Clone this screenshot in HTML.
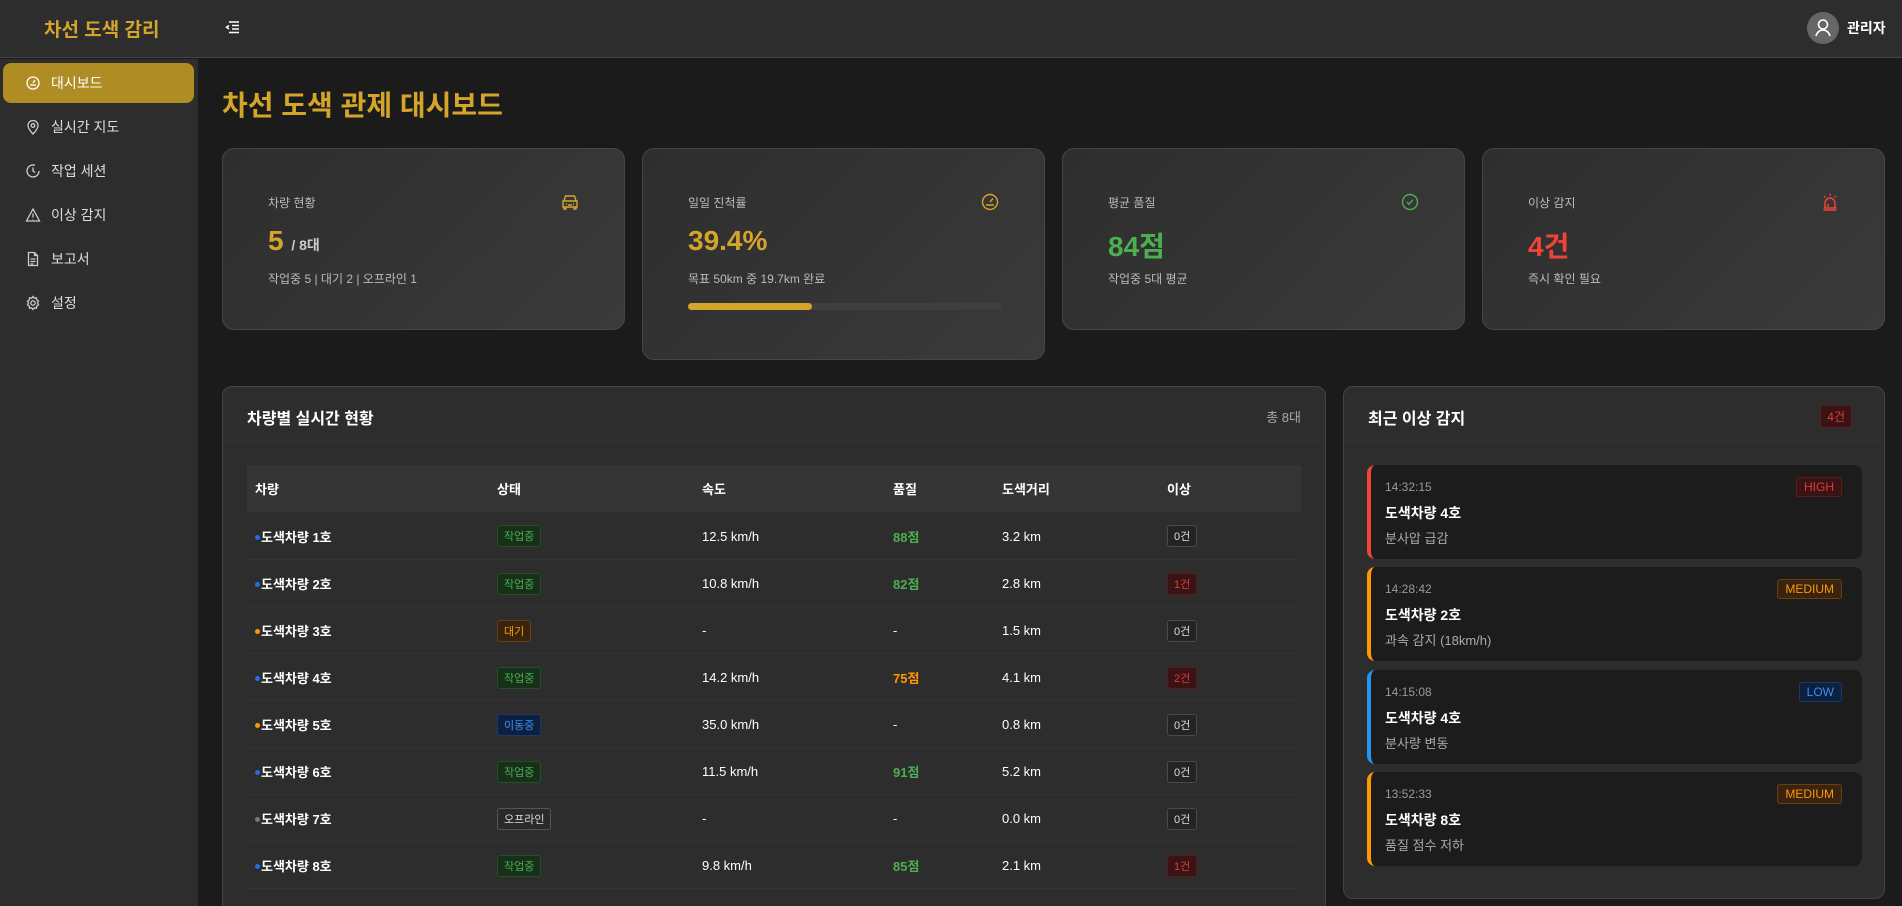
<!DOCTYPE html>
<html><head><meta charset="utf-8"><style>
*{box-sizing:border-box;margin:0;padding:0}
html{width:1902px;height:906px;overflow:hidden}
body{width:1902px;height:906px;overflow:hidden;background:#1b1b1b;font-family:"Liberation Sans","Noto Sans CJK KR",sans-serif;color:#fff;position:relative}
.hdr{position:absolute;left:0;top:0;width:1902px;height:58px;background:#2d2d2d;border-bottom:1px solid #444}
.logo{position:absolute;left:44px;top:15px;font-size:19px;font-weight:bold;color:#d4a52a}
.side{position:absolute;left:0;top:59px;width:198px;height:847px;background:#2d2d2d}
.nav{position:absolute;left:3px;width:191px;height:40px;border-radius:8px;display:flex;align-items:center;padding-left:22px;font-size:14px;color:#ddd;gap:10px}
.nav.act{background:#b08d24;color:#fff}
.nav svg{width:16px;height:16px}
h1{position:absolute;left:222px;top:84px;font-size:28px;color:#d4a52a;font-weight:bold}
.card{position:absolute;top:148px;height:182px;width:403px;border-radius:12px;border:1px solid #464646;background:linear-gradient(135deg,#2e2e2e,#3a3a3a)}
.card .lb{position:absolute;left:45px;top:45px;font-size:12px;color:#bbb}
.card .ic{position:absolute;right:44px;top:43px;width:20px;height:20px}
.card .v{position:absolute;left:45px;top:76px;font-size:28px;font-weight:bold}
.card .s{position:absolute;left:45px;top:121px;font-size:12px;color:#bbb}
.panel{position:absolute;top:386px;border-radius:10px;border:1px solid #444;background:#2d2d2d}
.ph{height:55px;border-bottom:1px solid #353535;position:relative}
.ph .t{position:absolute;left:24px;top:18px;font-size:16px;font-weight:bold}
table{position:absolute;left:24px;top:78px;width:1054px;border-collapse:collapse;font-size:13px}
th{height:47px;background:#353535;text-align:left;font-weight:bold;padding-left:8px;font-size:13px}
td{height:47px;border-bottom:1px solid #333;padding-left:8px;padding-top:2px}
td.n{font-weight:bold}
.dot{display:inline-block;width:5px;height:5px;border-radius:50%;margin-right:1px;vertical-align:middle;position:relative;top:-1px}
.b{display:inline-block;font-size:11px;padding:2px 6px;border-radius:3px;border:1px solid}
.g{background:#16301a;border-color:#274d27;color:#4caf50}
.o{background:#3a2410;border-color:#6a3e14;color:#ff9800}
.bl{background:#0e2040;border-color:#1b3a6a;color:#3f8ef0}
.gr{background:#2a2a2a;border-color:#555;color:#ddd}
.z{background:#242424;border-color:#4a4a4a;color:#ddd}
.r{background:#3a1414;border-color:#5c1c1c;color:#e53935}
.al{position:absolute;left:23px;width:495px;height:94px;background:#1c1c1c;border-radius:8px;border-left:4px solid}
.al .tm{position:absolute;left:14px;top:15px;font-size:12px;color:#999}
.al .nm{position:absolute;left:14px;top:38px;font-size:14px;font-weight:bold}
.al .ds{position:absolute;left:14px;top:63px;font-size:13px;color:#aaa}
.al .b{position:absolute;right:20px;top:12px;font-size:12px;padding:2px 7px}
</style></head><body>
<div class="hdr">
<div class="logo">차선 도색 감리</div>
<svg style="position:absolute;left:224px;top:19px" width="16" height="16" viewBox="0 0 16 16" fill="none" stroke="#fff" stroke-width="1.5"><path d="M5 3h10M8 6.5h7M8 10h7M5 13.5h10M5 6.5L2.5 8.2 5 10"/></svg>
<div style="position:absolute;left:1807px;top:12px;width:32px;height:32px;border-radius:50%;background:#666"><svg width="32" height="32" viewBox="0 0 32 32" fill="none" stroke="#fff" stroke-width="1.6"><circle cx="16" cy="12.5" r="4.5"/><path d="M9 24c1-4 4-6 7-6s6 2 7 6"/></svg></div>
<div style="position:absolute;left:1847px;top:18px;font-size:14px;font-weight:bold">관리자</div>
</div>
<div class="side">
<div class="nav act" style="top:4px"><svg viewBox="0 0 16 16" fill="none" stroke="#fff" stroke-width="1.3"><circle cx="8" cy="8" r="6"/><path d="M8 8l2-3M5 10h6"/></svg>대시보드</div>
<div class="nav" style="top:48px"><svg viewBox="0 0 16 16" fill="none" stroke="#ccc" stroke-width="1.3"><path d="M8 15s5-5 5-8.5A5 5 0 0 0 3 6.5C3 10 8 15 8 15z"/><circle cx="8" cy="6.5" r="1.8"/></svg>실시간 지도</div>
<div class="nav" style="top:92px"><svg viewBox="0 0 16 16" fill="none" stroke="#ccc" stroke-width="1.3"><path d="M14 8A6 6 0 1 1 10 2.3M8 4.5V8l2 1.5"/></svg>작업 세션</div>
<div class="nav" style="top:136px"><svg viewBox="0 0 16 16" fill="none" stroke="#ccc" stroke-width="1.3"><path d="M8 2L1.5 14h13zM8 6.5v4M8 12v.5"/></svg>이상 감지</div>
<div class="nav" style="top:180px"><svg viewBox="0 0 16 16" fill="none" stroke="#ccc" stroke-width="1.3"><path d="M3.5 1.5h6l3 3v10h-9zM9.5 1.5v3h3M5.5 8h5M5.5 10.5h5M5.5 13h3"/></svg>보고서</div>
<div class="nav" style="top:224px"><svg viewBox="0 0 16 16" fill="none" stroke="#ccc" stroke-width="1.3"><circle cx="8" cy="8" r="2.2"/><path d="M8 1.5l1.3 1.7 2.1-.4.4 2.1 1.7 1.3-1 1.8 1 1.8-1.7 1.3-.4 2.1-2.1-.4L8 14.5l-1.3-1.7-2.1.4-.4-2.1L2.5 9.8l1-1.8-1-1.8 1.7-1.3.4-2.1 2.1.4z"/></svg>설정</div>
</div>
<h1>차선 도색 관제 대시보드</h1>

<div class="card" style="left:222px"><div class="lb">차량 현황</div>
<svg class="ic" viewBox="0 0 20 20" fill="none" stroke="#d4a52a" stroke-width="1.4"><path d="M4 9l1.5-5h9L16 9M3 9h14v6H3zM4 15v2h2v-2M14 15v2h2v-2M6 12h1M13 12h1M8 13h4"/></svg>
<div class="v" style="color:#d4a52a">5 <span style="font-size:14px;color:#ccc">/ 8대</span></div><div class="s">작업중 5 | 대기 2 | 오프라인 1</div></div>
<div class="card" style="left:642px;height:212px"><div class="lb">일일 진척률</div>
<svg class="ic" viewBox="0 0 20 20" fill="none" stroke="#d4a52a" stroke-width="1.4"><circle cx="10" cy="10" r="7.5"/><path d="M10 10l3-3.5M6 13h8"/></svg>
<div class="v" style="color:#d4a52a">39.4%</div><div class="s">목표 50km 중 19.7km 완료</div>
<div style="position:absolute;left:45px;top:154px;width:314px;height:7px;border-radius:4px;background:#3f3f3f"><div style="width:39.4%;height:7px;border-radius:4px;background:#d4a52a"></div></div></div>
<div class="card" style="left:1062px"><div class="lb">평균 품질</div>
<svg class="ic" viewBox="0 0 20 20" fill="none" stroke="#4caf50" stroke-width="1.4"><circle cx="10" cy="10" r="7.5"/><path d="M7 10l2 2.2 4-4.5"/></svg>
<div class="v" style="color:#4caf50">84점</div><div class="s">작업중 5대 평균</div></div>
<div class="card" style="left:1482px"><div class="lb">이상 감지</div>
<svg class="ic" viewBox="0 0 20 20" fill="none" stroke="#f44336" stroke-width="1.4"><path d="M5 16v-5a5 5 0 0 1 10 0v5M3.5 16h13M3.5 18h13M10 1.5v2M4 4l1.3 1.3M16 4l-1.3 1.3M8 15v-3"/></svg>
<div class="v" style="color:#f44336">4건</div><div class="s">즉시 확인 필요</div></div>

<div class="panel" style="left:222px;width:1104px;height:530px">
<div class="ph"><div class="t">차량별 실시간 현황</div><div style="position:absolute;right:24px;top:20px;font-size:13px;color:#aaa">총 8대</div></div>
<table>
<tr><th style="width:242px">차량</th><th style="width:205px">상태</th><th style="width:191px">속도</th><th style="width:109px">품질</th><th style="width:165px">도색거리</th><th>이상</th></tr>
<tr><td class="n"><span class="dot" style="background:#1e6fe0"></span>도색차량 1호</td><td><span class="b g">작업중</span></td><td>12.5 km/h</td><td style="color:#4caf50;font-weight:bold">88점</td><td>3.2 km</td><td><span class="b z">0건</span></td></tr>
<tr><td class="n"><span class="dot" style="background:#1e6fe0"></span>도색차량 2호</td><td><span class="b g">작업중</span></td><td>10.8 km/h</td><td style="color:#4caf50;font-weight:bold">82점</td><td>2.8 km</td><td><span class="b r">1건</span></td></tr>
<tr><td class="n"><span class="dot" style="background:#ff9800"></span>도색차량 3호</td><td><span class="b o">대기</span></td><td>-</td><td>-</td><td>1.5 km</td><td><span class="b z">0건</span></td></tr>
<tr><td class="n"><span class="dot" style="background:#1e6fe0"></span>도색차량 4호</td><td><span class="b g">작업중</span></td><td>14.2 km/h</td><td style="color:#ff9800;font-weight:bold">75점</td><td>4.1 km</td><td><span class="b r">2건</span></td></tr>
<tr><td class="n"><span class="dot" style="background:#ff9800"></span>도색차량 5호</td><td><span class="b bl">이동중</span></td><td>35.0 km/h</td><td>-</td><td>0.8 km</td><td><span class="b z">0건</span></td></tr>
<tr><td class="n"><span class="dot" style="background:#1e6fe0"></span>도색차량 6호</td><td><span class="b g">작업중</span></td><td>11.5 km/h</td><td style="color:#4caf50;font-weight:bold">91점</td><td>5.2 km</td><td><span class="b z">0건</span></td></tr>
<tr><td class="n"><span class="dot" style="background:#777"></span>도색차량 7호</td><td><span class="b gr">오프라인</span></td><td>-</td><td>-</td><td>0.0 km</td><td><span class="b z">0건</span></td></tr>
<tr><td class="n"><span class="dot" style="background:#1e6fe0"></span>도색차량 8호</td><td><span class="b g">작업중</span></td><td>9.8 km/h</td><td style="color:#4caf50;font-weight:bold">85점</td><td>2.1 km</td><td><span class="b r">1건</span></td></tr>
</table></div>

<div class="panel" style="left:1343px;width:542px;height:513px">
<div class="ph"><div class="t">최근 이상 감지</div><span class="b r" style="position:absolute;right:32px;top:18px;font-size:12px">4건</span></div>
<div class="al" style="top:78px;border-color:#f44336"><div class="tm">14:32:15</div><div class="nm">도색차량 4호</div><div class="ds">분사압 급감</div><span class="b r">HIGH</span></div>
<div class="al" style="top:180px;border-color:#ff9800"><div class="tm">14:28:42</div><div class="nm">도색차량 2호</div><div class="ds">과속 감지 (18km/h)</div><span class="b o">MEDIUM</span></div>
<div class="al" style="top:283px;border-color:#2196f3"><div class="tm">14:15:08</div><div class="nm">도색차량 4호</div><div class="ds">분사량 변동</div><span class="b bl">LOW</span></div>
<div class="al" style="top:385px;border-color:#ff9800"><div class="tm">13:52:33</div><div class="nm">도색차량 8호</div><div class="ds">품질 점수 저하</div><span class="b o">MEDIUM</span></div>
</div>
</body></html>
